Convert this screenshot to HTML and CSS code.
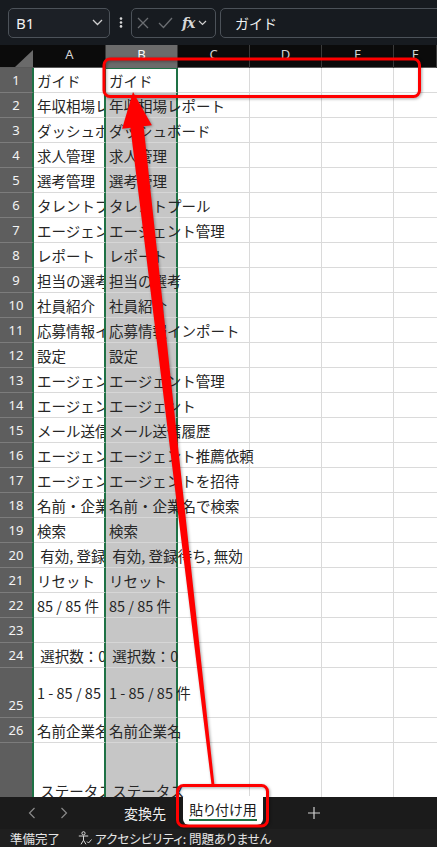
FILE: index.html
```html
<!DOCTYPE html>
<html lang="ja">
<head>
  <meta charset="UTF-8">
  <title>貼り付け用 - Excel</title>
  <meta name="viewport" content="width=device-width, initial-scale=1.0">
  <link rel="stylesheet" href="styles.css">
</head>
<body>
<div class="app">

  <!-- name box + formula bar -->
  <div class="toolbar">
    <div class="namebox">
      <span>B1</span>
      <svg width="11" height="7" viewBox="0 0 11 7"><path d="M1 1l4.5 4.5L10 1" fill="none" stroke="#cfcfcf" stroke-width="1.3"/></svg>
    </div>
    <div class="kebab">
      <svg width="4" height="11" viewBox="0 0 4 11"><circle cx="2" cy="1.6" r="1.3" fill="#d8d8d8"/><circle cx="2" cy="5.5" r="1.3" fill="#d8d8d8"/><circle cx="2" cy="9.4" r="1.3" fill="#d8d8d8"/></svg>
    </div>
    <div class="fx-group">
      <svg width="12" height="12" viewBox="0 0 12 12"><path d="M1 1l10 10M11 1L1 11" stroke="#6b6e72" stroke-width="1.3" fill="none"/></svg>
      <svg class="ok" width="15" height="12" viewBox="0 0 15 12"><path d="M1 6l4.5 4.5L14 1" stroke="#6b6e72" stroke-width="1.3" fill="none"/></svg>
      <span class="fx">fx</span>
      <svg width="9" height="6" viewBox="0 0 9 6"><path d="M1 1l3.5 3.5L8 1" fill="none" stroke="#cfcfcf" stroke-width="1.2"/></svg>
    </div>
    <div class="formula">ガイド</div>
  </div>

  <!-- grid -->
  <div class="sheet">
    <div class="head">
      <div class="corner"><span></span></div>
      <div class="col">A</div>
      <div class="col sel">B</div>
      <div class="col">C</div>
      <div class="col">D</div>
      <div class="col">E</div>
      <div class="col">F</div>
    </div>

    <div class="row"><div class="rh">1</div><div class="c a">ガイド</div><div class="c b active">ガイド</div><div class="rest"></div></div>
    <div class="row"><div class="rh">2</div><div class="c a">年収相場レポート</div><div class="c b">年収相場レポート</div><div class="rest"></div></div>
    <div class="row"><div class="rh">3</div><div class="c a">ダッシュボード</div><div class="c b">ダッシュボード</div><div class="rest"></div></div>
    <div class="row"><div class="rh">4</div><div class="c a">求人管理</div><div class="c b">求人管理</div><div class="rest"></div></div>
    <div class="row"><div class="rh">5</div><div class="c a">選考管理</div><div class="c b">選考管理</div><div class="rest"></div></div>
    <div class="row"><div class="rh">6</div><div class="c a">タレントプール</div><div class="c b">タレントプール</div><div class="rest"></div></div>
    <div class="row"><div class="rh">7</div><div class="c a">エージェント管理</div><div class="c b">エージェント管理</div><div class="rest"></div></div>
    <div class="row"><div class="rh">8</div><div class="c a">レポート</div><div class="c b">レポート</div><div class="rest"></div></div>
    <div class="row"><div class="rh">9</div><div class="c a">担当の選考</div><div class="c b">担当の選考</div><div class="rest"></div></div>
    <div class="row"><div class="rh">10</div><div class="c a">社員紹介</div><div class="c b">社員紹介</div><div class="rest"></div></div>
    <div class="row"><div class="rh">11</div><div class="c a">応募情報インポート</div><div class="c b">応募情報インポート</div><div class="rest"></div></div>
    <div class="row"><div class="rh">12</div><div class="c a">設定</div><div class="c b">設定</div><div class="rest"></div></div>
    <div class="row"><div class="rh">13</div><div class="c a">エージェント管理</div><div class="c b">エージェント管理</div><div class="rest"></div></div>
    <div class="row"><div class="rh">14</div><div class="c a">エージェント</div><div class="c b">エージェント</div><div class="rest"></div></div>
    <div class="row"><div class="rh">15</div><div class="c a">メール送信履歴</div><div class="c b">メール送信履歴</div><div class="rest"></div></div>
    <div class="row"><div class="rh">16</div><div class="c a">エージェント推薦依頼</div><div class="c b">エージェント推薦依頼</div><div class="rest"></div></div>
    <div class="row"><div class="rh">17</div><div class="c a">エージェントを招待</div><div class="c b">エージェントを招待</div><div class="rest"></div></div>
    <div class="row"><div class="rh">18</div><div class="c a">名前・企業名で検索</div><div class="c b">名前・企業名で検索</div><div class="rest"></div></div>
    <div class="row"><div class="rh">19</div><div class="c a">検索</div><div class="c b">検索</div><div class="rest"></div></div>
    <div class="row"><div class="rh">20</div><div class="c a"> 有効, 登録待ち, 無効</div><div class="c b"> 有効, 登録待ち, 無効</div><div class="rest"></div></div>
    <div class="row"><div class="rh">21</div><div class="c a">リセット</div><div class="c b">リセット</div><div class="rest"></div></div>
    <div class="row"><div class="rh">22</div><div class="c a">85 / 85 件</div><div class="c b">85 / 85 件</div><div class="rest"></div></div>
    <div class="row"><div class="rh">23</div><div class="c a"></div><div class="c b"></div><div class="rest"></div></div>
    <div class="row"><div class="rh">24</div><div class="c a"> 選択数：0</div><div class="c b"> 選択数：0</div><div class="rest"></div></div>
    <div class="row tall"><div class="rh">25</div><div class="c a">1 - 85 / 85 件</div><div class="c b">1 - 85 / 85 件</div><div class="rest"></div></div>
    <div class="row"><div class="rh">26</div><div class="c a">名前企業名</div><div class="c b">名前企業名</div><div class="rest"></div></div>
    <div class="row xtall"><div class="rh">27</div><div class="c a"> ステータス</div><div class="c b"> ステータス</div><div class="rest"></div></div>
  </div>

  <!-- sheet tabs -->
  <div class="tabs">
    <div class="nav">
      <svg width="8" height="12" viewBox="0 0 8 12"><path d="M6.5 1L1.5 6l5 5" fill="none" stroke="#8a8a8a" stroke-width="1.2"/></svg>
      <svg width="8" height="12" viewBox="0 0 8 12"><path d="M1.5 1l5 5-5 5" fill="none" stroke="#8a8a8a" stroke-width="1.2"/></svg>
    </div>
    <div class="tab">変換先</div>
    <div class="tab current"><span>貼り付け用</span></div>
    <div class="add">
      <svg width="12" height="12" viewBox="0 0 12 12"><path d="M6 0v12M0 6h12" stroke="#d0d0d0" stroke-width="1.2"/></svg>
    </div>
  </div>

  <!-- status bar -->
  <div class="status">
    <span class="ready">準備完了</span>
    <svg class="a11y" width="14" height="14" viewBox="0 0 14 14"><circle cx="5.5" cy="2.3" r="1.6" fill="none" stroke="#d8d8d8" stroke-width="1"/><path d="M0.8 5h9.4M5.5 5v4.2M5.5 9.2L3 13.3M5.5 9.2l2.5 4.1" fill="none" stroke="#d8d8d8" stroke-width="1"/><path d="M9 10.5l1.5 1.5 3-3.5" fill="none" stroke="#d8d8d8" stroke-width="1"/></svg>
    <span>アクセシビリティ: 問題ありません</span>
  </div>

  <!-- annotation drawn over the screenshot -->
  <svg class="marks" width="437" height="847" viewBox="0 0 437 847">
    <rect x="104" y="59" width="315.5" height="37.5" rx="6" fill="none" stroke="#ff0000" stroke-width="3"/>
    <rect x="177.5" y="785.5" width="90" height="40.5" rx="6" fill="none" stroke="#ff0000" stroke-width="3"/>
    <polygon fill="#ff0000" points="133,92 151.9,125.3 143.6,126.2 214.4,784.8 211.6,785.2 130.4,127.8 122.1,128.7"/>
  </svg>
</div>
</body>
</html>
```

FILE: styles.css
```css
:root {
  --green: #1e7145;
  --grid: #dadada;
  --box: #4c5259;
}

body {
  margin: 0;
  background: #171b20;
  font-family: "Noto Sans CJK JP", "Noto Sans", sans-serif;
}

.app {
  position: relative;
  width: 437px;
  height: 847px;
  overflow: hidden;
}

/* toolbar */
.toolbar {
  height: 45px;
  display: flex;
  align-items: center;
  padding-left: 8px;
  background: #171b20;
  overflow: hidden;
}

.namebox {
  width: 102px;
  height: 30px;
  box-sizing: border-box;
  border: 1px solid var(--box);
  border-radius: 5px;
  background: #1c2026;
  display: flex;
  align-items: center;
  justify-content: space-between;
  padding: 0 6px 0 7px;
  font-family: "Noto Sans", sans-serif;
  font-size: 15px;
  color: #f2f2f2;
}

.kebab {
  width: 21px;
  display: flex;
  justify-content: center;
}

.fx-group {
  width: 85px;
  height: 30px;
  box-sizing: border-box;
  border: 1px solid var(--box);
  border-radius: 5px;
  display: flex;
  align-items: center;
  padding-left: 5px;
}

.fx-group .ok {
  margin-left: 9px;
}

.fx {
  margin-left: 9px;
  margin-right: 4px;
  font-family: "DejaVu Serif", serif;
  font-style: italic;
  font-weight: bold;
  font-size: 14px;
  color: #d6d6d6;
  letter-spacing: -1px;
}

.formula {
  flex: 1;
  height: 30px;
  box-sizing: border-box;
  margin-left: 4px;
  margin-right: -10px;
  border: 1px solid var(--box);
  border-radius: 5px;
  display: flex;
  align-items: center;
  padding-left: 14px;
  font-size: 14px;
  color: #f0f0f0;
}

/* sheet */
.sheet {
  height: 752px;
  overflow: hidden;
  background: #fff;
}

.head {
  display: grid;
  grid-template-columns: 34px 72px 72px 72px 72px 72px 43px;
  height: 23px;
  box-sizing: border-box;
  background: #0b0b0b;
  border-bottom: 1px solid #5a5a5a;
}

.corner {
  display: flex;
  justify-content: flex-end;
  align-items: flex-end;
  padding: 0 1px 1px 0;
}

.corner span {
  width: 18px;
  height: 17px;
  background: #6a6a6a;
  clip-path: polygon(100% 0, 100% 100%, 0 100%);
}

.col {
  display: flex;
  justify-content: center;
  align-items: center;
  padding-bottom: 5px;
  border-right: 1px solid #3a3a3a;
  font-family: "Noto Sans", sans-serif;
  font-size: 13px;
  color: #d4d4d4;
}

.col.sel {
  background: #6b6b6b;
  color: #fff;
}

.row {
  display: grid;
  grid-template-columns: 34px 72px 72px 1fr;
  height: 25px;
}

.row.tall {
  height: 50px;
}

.row.xtall {
  height: 96px;
}

.rh {
  box-sizing: border-box;
  background: #5e5e5e;
  border-right: 2px solid var(--green);
  border-bottom: 1px solid #7c7c7c;
  display: flex;
  justify-content: center;
  align-items: flex-end;
  padding-bottom: 3px;
  line-height: 17px;
  font-family: "Noto Sans", sans-serif;
  font-size: 13px;
  color: #f4f4f4;
}

.c {
  box-sizing: border-box;
  display: flex;
  align-items: center;
  padding-left: 3px;
  border-bottom: 1px solid var(--grid);
  border-right: 2px solid var(--green);
  white-space: pre;
  font-size: 14.5px;
  color: #262626;
}

.c.a {
  overflow: hidden;
  background: #fff;
}

.c.b {
  position: relative;
  z-index: 1;
  background: #c6c6c6;
  border-bottom-color: #d6d6d6;
}

.c.b.active {
  background: #fff;
  box-shadow: inset 0 1px 0 var(--green);
}

.rest {
  border-bottom: 1px solid var(--grid);
  background-image: linear-gradient(to right, transparent 71px, var(--grid) 71px, var(--grid) 72px, transparent 72px);
  background-size: 72px 100%;
}

/* sheet tabs */
.tabs {
  height: 32px;
  display: flex;
  background: #1b1b1b;
  font-size: 14px;
  font-feature-settings: "palt";
  color: #f0f0f0;
}

.nav {
  width: 110px;
  display: flex;
  align-items: center;
  gap: 24px;
  padding-left: 28px;
  box-sizing: border-box;
}

.tab {
  width: 70px;
  display: flex;
  justify-content: center;
  align-items: center;
}

.tab.current {
  width: 80px;
  margin-left: 3px;
  margin-top: -1px;
  height: 29px;
  background: #fff;
  border-radius: 0 0 6px 6px;
  color: #1a1a1a;
}

.tab.current span {
  padding-bottom: 1px;
  border-bottom: 2px solid var(--green);
  line-height: 18px;
}

.add {
  margin-left: 45px;
  display: flex;
  align-items: center;
}

/* status bar */
.status {
  height: 18px;
  display: flex;
  align-items: center;
  padding-left: 10px;
  background: #1f1f1f;
  font-size: 12.5px;
  font-feature-settings: "palt";
  color: #e6e6e6;
}

.ready {
  width: 68px;
}

.a11y {
  margin-right: 3px;
}

/* red markup, over the grid */
.marks {
  position: absolute;
  top: 0;
  left: 0;
  z-index: 5;
  pointer-events: none;
  filter: drop-shadow(1px 1px 1.5px rgba(0, 0, 0, 0.35));
}
```
